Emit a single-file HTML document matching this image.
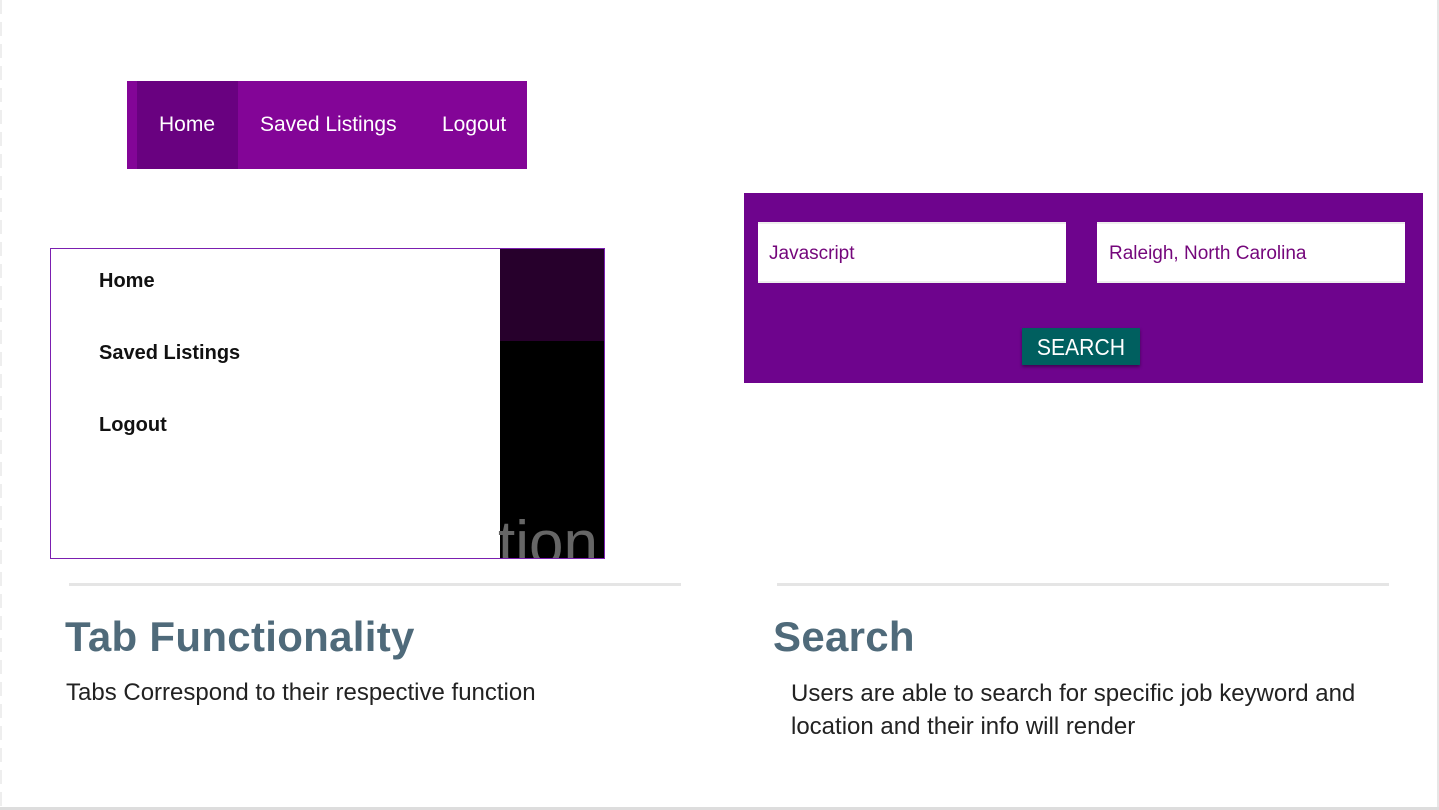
<!DOCTYPE html>
<html><head><style>
body{margin:0;width:1439px;height:810px;background:#fff;position:relative;overflow:hidden;font-family:"Liberation Sans",sans-serif}
.a{position:absolute}
</style></head><body>
<div class="a" style="left:0;top:0;width:2px;height:810px;background:repeating-linear-gradient(#eee 0 14px,#fff 14px 22px)"></div>
<div class="a" style="left:1437px;top:0;width:2px;height:810px;background:#e6e6e6"></div>
<div class="a" style="left:0;top:807px;width:1439px;height:3px;background:#ddd"></div>

<div class="a" style="left:127px;top:81px;width:400px;height:88px;background:#830597"></div>
<div class="a" style="left:137px;top:81px;width:101px;height:88px;background:#690180"></div>
<div class="a" style="left:159px;top:113px;color:#fff;font-size:21px">Home</div>
<div class="a" style="left:260px;top:113px;color:#fff;font-size:21px">Saved Listings</div>
<div class="a" style="left:442px;top:113px;color:#fff;font-size:21px">Logout</div>

<div class="a" style="left:50px;top:248px;width:553px;height:309px;border:1px solid #7b1fb0;background:#fff;overflow:hidden">
<div class="a" style="left:449px;top:0;width:104px;height:92px;background:#27002c"></div>
<div class="a" style="left:449px;top:92px;width:104px;height:217px;background:#000"></div>
<div class="a" style="left:447px;top:260px;color:#666;font-size:62px;line-height:70px">tion</div>
<div class="a" style="left:48px;top:21px;font-size:20px;font-weight:bold;color:#111">Home</div>
<div class="a" style="left:48px;top:93px;font-size:20px;font-weight:bold;color:#111">Saved Listings</div>
<div class="a" style="left:48px;top:165px;font-size:20px;font-weight:bold;color:#111">Logout</div>
</div>

<div class="a" style="left:744px;top:193px;width:679px;height:190px;background:#6e048d"></div>
<div class="a" style="left:758px;top:222px;width:308px;height:61px;background:#fff;border-top:2px solid #eee;border-bottom:2px solid #eee;box-sizing:border-box"></div>
<div class="a" style="left:769px;top:243px;color:#74067b;font-size:19px">Javascript</div>
<div class="a" style="left:1097px;top:222px;width:308px;height:61px;background:#fff;border-top:2px solid #eee;border-bottom:2px solid #eee;box-sizing:border-box"></div>
<div class="a" style="left:1109px;top:243px;color:#74067b;font-size:19px">Raleigh, North Carolina</div>
<div class="a" style="left:1022px;top:328px;width:118px;height:37px;background:#005f5f;box-shadow:0 2px 3px rgba(0,0,0,.4);color:#fff;font-size:23px;text-align:center;line-height:38px"><span style="display:inline-block;transform:scaleX(0.92)">SEARCH</span></div>

<div class="a" style="left:69px;top:583px;width:612px;height:3px;background:#e5e5e5"></div>
<div class="a" style="left:777px;top:583px;width:612px;height:3px;background:#e5e5e5"></div>
<div class="a" style="left:65px;top:613px;font-size:42px;font-weight:bold;color:#4f6a7a;letter-spacing:0.3px">Tab Functionality</div>
<div class="a" style="left:773px;top:613px;font-size:42px;font-weight:bold;color:#4f6a7a;letter-spacing:0.3px">Search</div>
<div class="a" style="left:66px;top:679px;font-size:24px;color:#222">Tabs Correspond to their respective function</div>
<div class="a" style="left:791px;top:677px;font-size:24px;color:#222;line-height:33px">Users are able to search for specific job keyword and<br>location and their info will render</div>
</body></html>
